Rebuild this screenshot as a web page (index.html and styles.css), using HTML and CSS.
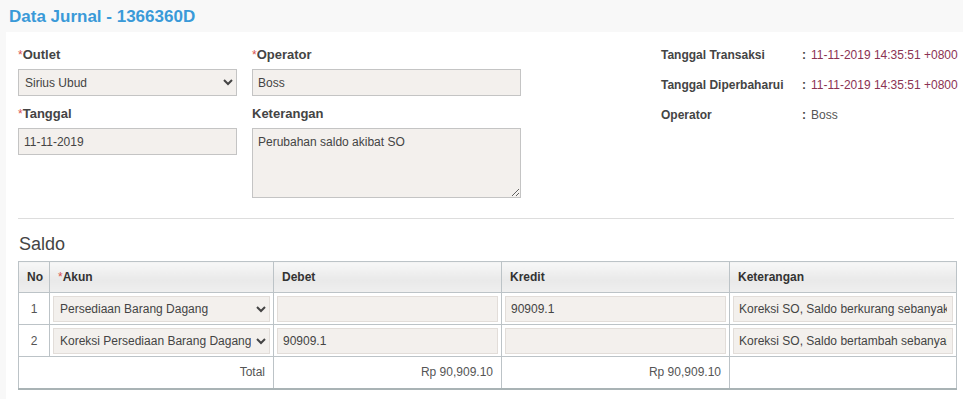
FILE: index.html
```html
<!DOCTYPE html>
<html lang="id">
<head>
    <meta charset="UTF-8">
    <title>Data Jurnal - 1366360D</title>
    <link rel="stylesheet" href="styles.css">
</head>
<body>
    <div class="page-title">Data Jurnal - 1366360D</div>

    <div class="panel">
        <div class="top">
            <div class="form-grid">
                <div class="field">
                    <label><span class="req">*</span>Outlet</label>
                    <select class="control">
                        <option>Sirius Ubud</option>
                    </select>
                </div>
                <div class="field">
                    <label><span class="req">*</span>Operator</label>
                    <input class="control" type="text" value="Boss">
                </div>
                <div class="field">
                    <label><span class="req">*</span>Tanggal</label>
                    <input class="control" type="text" value="11-11-2019">
                </div>
                <div class="field">
                    <label>Keterangan</label>
                    <textarea class="control note">Perubahan saldo akibat SO</textarea>
                </div>
            </div>

            <div class="info">
                <div class="info-row">
                    <span class="info-label">Tanggal Transaksi</span>
                    <span class="colon">:</span>
                    <span class="info-value date">11-11-2019 14:35:51 +0800</span>
                </div>
                <div class="info-row">
                    <span class="info-label">Tanggal Diperbaharui</span>
                    <span class="colon">:</span>
                    <span class="info-value date">11-11-2019 14:35:51 +0800</span>
                </div>
                <div class="info-row">
                    <span class="info-label">Operator</span>
                    <span class="colon">:</span>
                    <span class="info-value">Boss</span>
                </div>
            </div>
        </div>

        <hr class="divider">

        <h2 class="section-title">Saldo</h2>

        <table class="saldo">
            <thead>
                <tr>
                    <th class="col-no">No</th>
                    <th class="col-akun"><span class="req">*</span>Akun</th>
                    <th class="col-money">Debet</th>
                    <th class="col-money">Kredit</th>
                    <th>Keterangan</th>
                </tr>
            </thead>
            <tbody>
                <tr>
                    <td class="num">1</td>
                    <td class="cell">
                        <select class="control">
                            <option>Persediaan Barang Dagang</option>
                        </select>
                    </td>
                    <td class="cell"><input class="control" type="text" value=""></td>
                    <td class="cell"><input class="control" type="text" value="90909.1"></td>
                    <td class="cell"><input class="control" type="text" value="Koreksi SO, Saldo berkurang sebanyak 1"></td>
                </tr>
                <tr>
                    <td class="num">2</td>
                    <td class="cell">
                        <select class="control">
                            <option>Koreksi Persediaan Barang Dagang</option>
                        </select>
                    </td>
                    <td class="cell"><input class="control" type="text" value="90909.1"></td>
                    <td class="cell"><input class="control" type="text" value=""></td>
                    <td class="cell"><input class="control" type="text" value="Koreksi SO, Saldo bertambah sebanyak 1"></td>
                </tr>
                <tr class="total-row">
                    <td colspan="2" class="right">Total</td>
                    <td class="right">Rp 90,909.10</td>
                    <td class="right">Rp 90,909.10</td>
                    <td></td>
                </tr>
            </tbody>
        </table>
    </div>
</body>
</html>
```

FILE: styles.css
```css
body {
    margin: 0;
    background-color: #f8f8f8;
    font-family: "Liberation Sans", Arial, sans-serif;
    color: #444;
    overflow: hidden;
}

.page-title {
    height: 32px;
    line-height: 34px;
    padding-left: 9px;
    font-size: 17px;
    font-weight: bold;
    color: #3a9ad8;
}

.panel {
    margin-left: 6px;
    width: 960px;
    background-color: #fff;
    padding: 14px 12px 10px 12px;
    box-sizing: border-box;
}

.top {
    display: flex;
}

.form-grid {
    display: grid;
    grid-template-columns: 219px 269px;
    column-gap: 15px;
    align-items: start;
}

.field {
    display: flex;
    flex-direction: column;
    margin-bottom: 9px;
}

.field label {
    font-size: 13px;
    font-weight: bold;
    line-height: 18px;
    margin-bottom: 5px;
    color: #444;
}

.req {
    color: #d9534f;
    font-weight: normal;
    font-size: 12px;
}

.control {
    box-sizing: border-box;
    height: 27px;
    width: 100%;
    padding: 0 5px;
    background-color: #f3f0ed;
    border: 1px solid #c4c4c4;
    border-radius: 0;
    font-family: "Liberation Sans", Arial, sans-serif;
    font-size: 12px;
    color: #444;
    outline: none;
}

select.control {
    padding: 0 2px;
}

.note {
    height: 70px;
    padding: 6px 5px;
    resize: vertical;
}

.info {
    margin-left: 140px;
    padding-top: 1px;
}

.info-row {
    display: flex;
    height: 30px;
    line-height: 16px;
    font-size: 12px;
}

.info-label {
    width: 141px;
    font-weight: bold;
    color: #444;
}

.colon {
    width: 9px;
    font-weight: bold;
}

.info-value {
    color: #555;
    white-space: nowrap;
}

.info-value.date {
    color: #8b3253;
}

.divider {
    border: none;
    border-top: 1px solid #ddd;
    margin: 11px 0 0 0;
}

.section-title {
    font-size: 18px;
    font-weight: normal;
    color: #444;
    margin: 14px 0 6px 1px;
    line-height: 22px;
}

.saldo {
    width: 939px;
    border-collapse: collapse;
    font-size: 12px;
    table-layout: fixed;
    border-bottom: 2px solid #a9b3b5;
}

.saldo th,
.saldo td {
    border: 1px solid #bcc3c7;
}

.saldo th {
    height: 30px;
    padding: 0 8px;
    text-align: left;
    font-weight: bold;
    color: #333;
    background: linear-gradient(#f7f7f7, #e9e9e9 60%, #efefef);
}

.saldo th.col-no {
    width: 14px;
    text-align: center;
}

.saldo th.col-akun {
    width: 207px;
}

.saldo th.col-money {
    width: 211px;
}

.saldo tbody tr {
    height: 32px;
}

.saldo td {
    padding: 0;
    color: #555;
}

.saldo td.cell {
    padding: 3px 3px 2px 3px;
}

.saldo td.cell .control {
    display: block;
    height: 26px;
    border-color: #e2ddd9;
    padding: 0 5px;
}

.saldo td.cell select.control {
    padding: 0 2px;
}

.saldo td.num {
    text-align: center;
}

.saldo td.right {
    text-align: right;
    padding: 0 8px;
}
```
